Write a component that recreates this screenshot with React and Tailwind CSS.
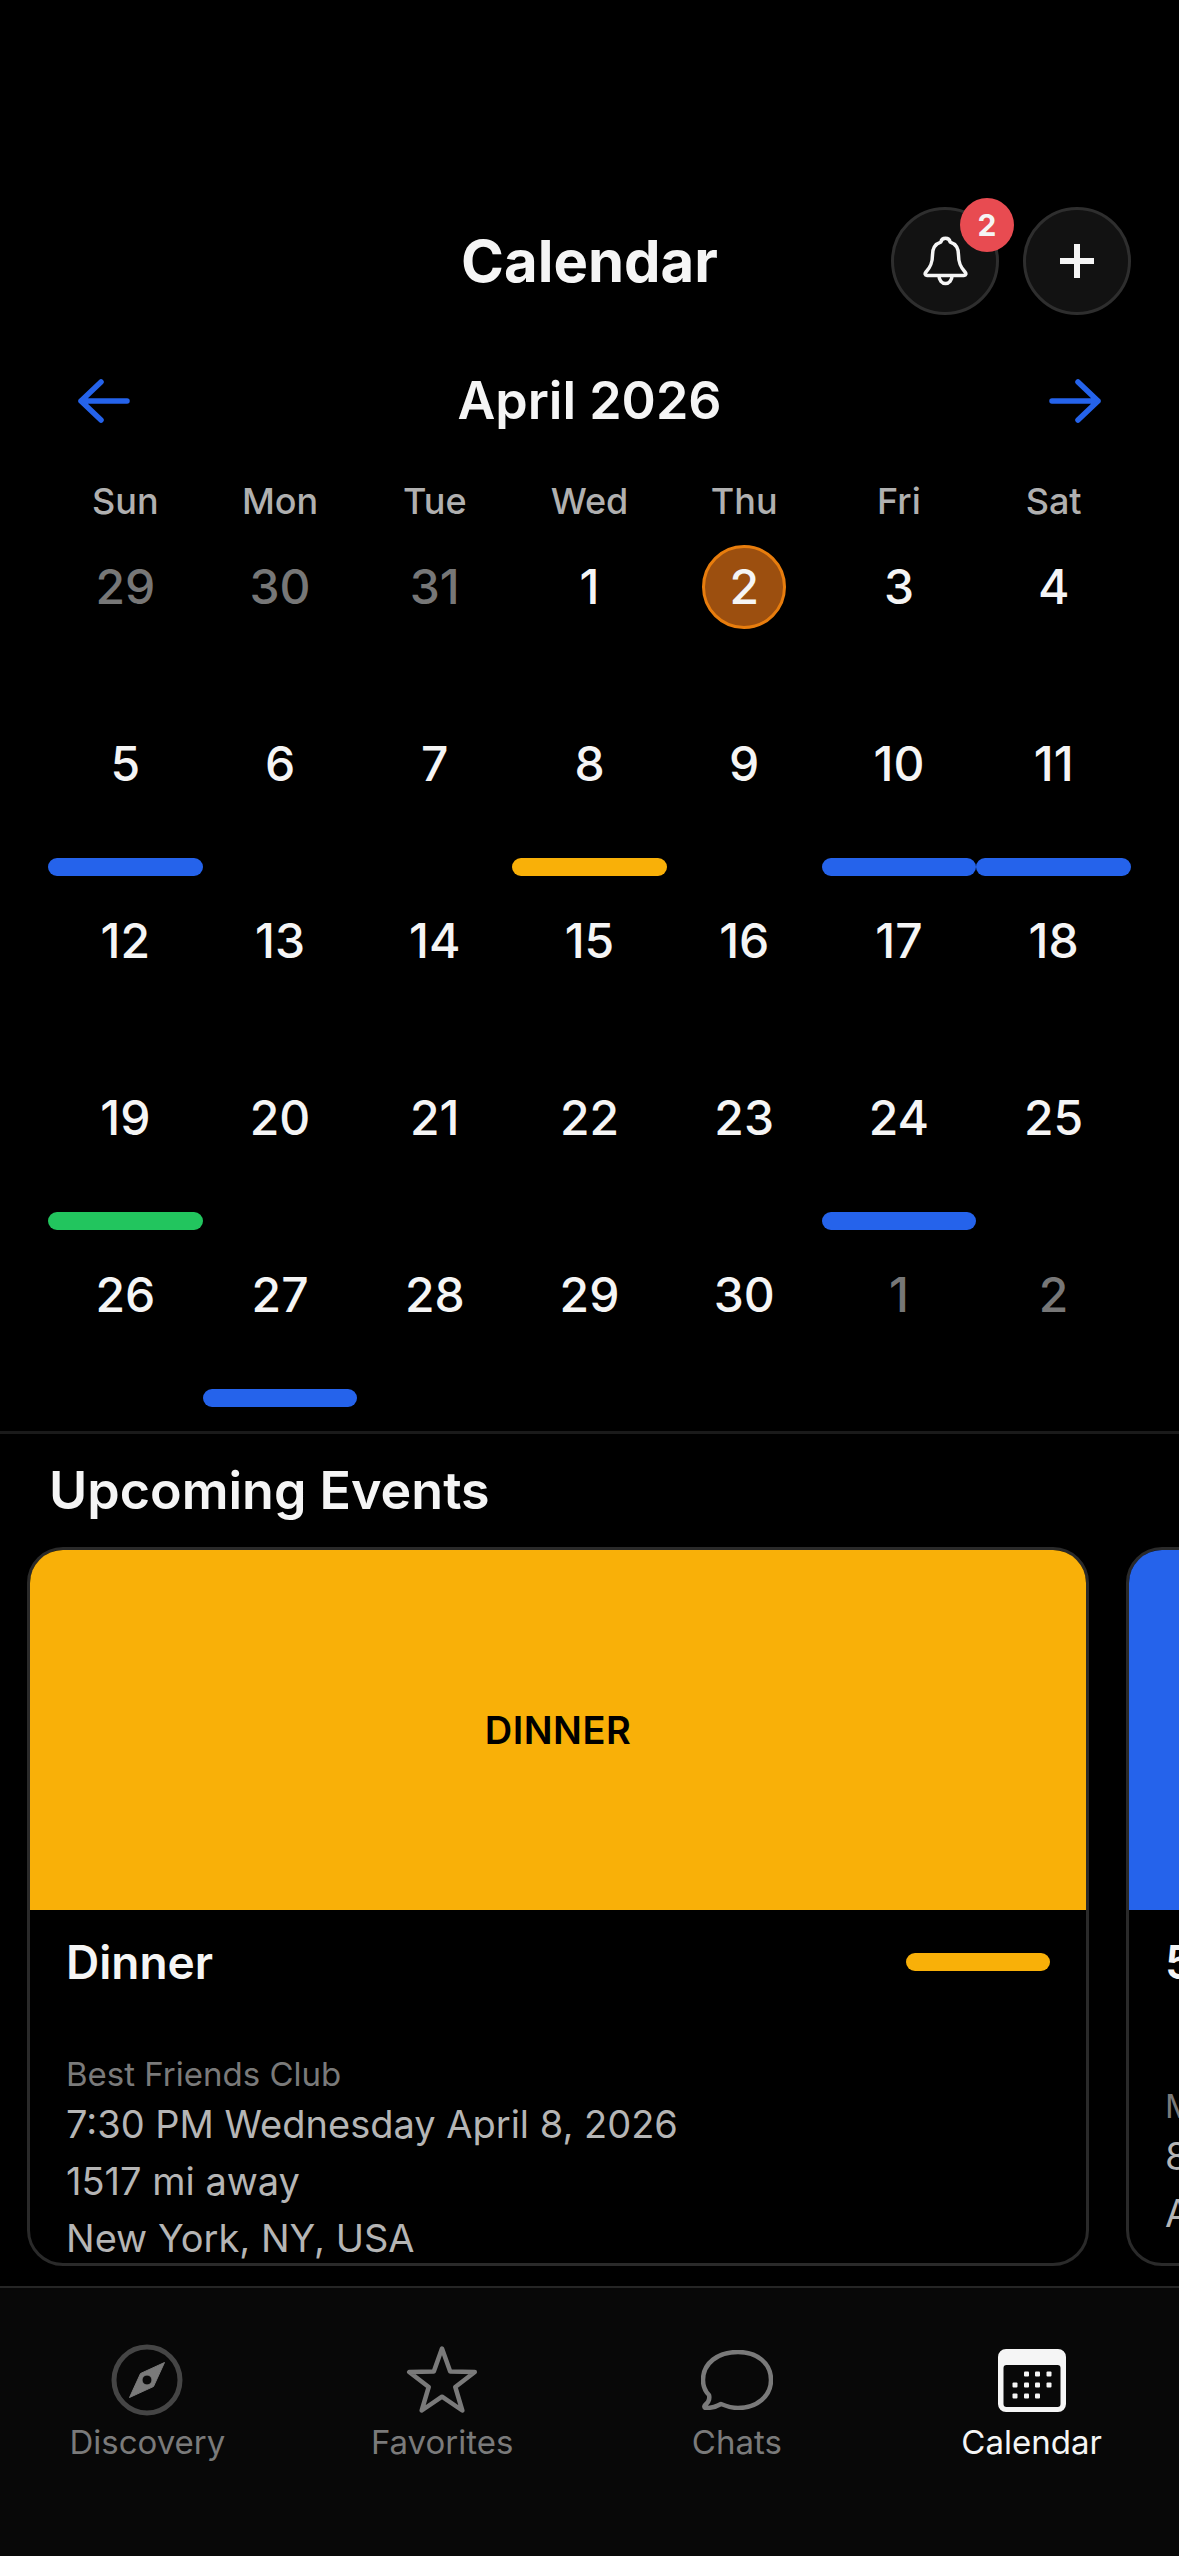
import React from "react";

const weekdays = ["Sun", "Mon", "Tue", "Wed", "Thu", "Fri", "Sat"];

const days = [
  { n: 29, muted: true }, { n: 30, muted: true }, { n: 31, muted: true }, { n: 1 }, { n: 2, today: true }, { n: 3 }, { n: 4 },
  { n: 5, bar: "bg-[#2563eb]" }, { n: 6 }, { n: 7 }, { n: 8, bar: "bg-[#f9b008]" }, { n: 9 }, { n: 10, bar: "bg-[#2563eb]" }, { n: 11, bar: "bg-[#2563eb]" },
  { n: 12 }, { n: 13 }, { n: 14 }, { n: 15 }, { n: 16 }, { n: 17 }, { n: 18 },
  { n: 19, bar: "bg-[#22c55e]" }, { n: 20 }, { n: 21 }, { n: 22 }, { n: 23 }, { n: 24, bar: "bg-[#2563eb]" }, { n: 25 },
  { n: 26 }, { n: 27, bar: "bg-[#2563eb]" }, { n: 28 }, { n: 29 }, { n: 30 }, { n: 1, muted: true }, { n: 2, muted: true },
];

const BellIcon = () => (
  <svg width="45" height="50" viewBox="0 0 45 50" fill="none" stroke="#f5f5f5" strokeWidth="3.5" strokeLinejoin="round">
    <path d="M22.5 2.2C25 2.2 26.8 4 27.2 6.2 33 8 35.5 13 35.5 19 35.5 27 37.5 31 42 36 43.5 37.7 43 39.5 41 39.5H4C2 39.5 1.5 37.7 3 36 7.5 31 9.5 27 9.5 19 9.5 13 12 8 17.8 6.2 18.2 4 20 2.2 22.5 2.2Z" />
    <path d="M16 40a6.5 7.5 0 0 0 13 0" />
  </svg>
);

const PlusIcon = () => (
  <svg width="34" height="34" viewBox="0 0 34 34" fill="none" stroke="#f5f5f5" strokeWidth="6">
    <path d="M17 0V34M0 17H34" />
  </svg>
);

const ArrowIcon = ({ flip }) => (
  <svg width="52" height="44" viewBox="0 0 52 44" fill="none" stroke="#2563eb" strokeWidth="5.5" strokeLinecap="round" strokeLinejoin="round" className={flip ? "-scale-x-100" : ""}>
    <path d="M3 22H49M23 3 3 22 23 41" />
  </svg>
);

const Compass = () => (
  <svg width="72" height="72" viewBox="0 0 72 72">
    <circle cx="36" cy="36" r="33" fill="none" stroke="#454545" strokeWidth="5" />
    <path fillRule="evenodd" fill="#7a7a7a" stroke="#7a7a7a" strokeWidth="1" strokeLinejoin="round" d="M53.5 18.5 42.5 42.5 18.5 53.5 29.5 29.5ZM36 31a5 5 0 1 0 0 10 5 5 0 0 0 0-10Z" />
  </svg>
);

const StarIcon = () => (
  <svg width="72" height="68" viewBox="0 0 72 68" fill="none" stroke="#7a7a7a" strokeWidth="4.5" strokeLinejoin="round">
    <path d="M36 2.5 44.2 25.5 68.8 26 49.3 41 56.3 64.5 36 50.7 15.7 64.5 22.7 41 3.2 26 27.8 25.5Z" />
  </svg>
);

const ChatBubble = () => (
  <svg width="72" height="60" viewBox="0 0 72 60" fill="none" stroke="#7a7a7a" strokeWidth="4.5" strokeLinejoin="round">
    <path d="M37 2C56 2 70 13 70 30 70 46 56 58 37 58 31 58 25 56 20 54 15 57 10 58 5 58 3 58 3 56 4 55 8 52 9 49 8 45 4 41 2 36 2 30 2 13 17 2 37 2Z" />
  </svg>
);

const CalendarIcon = () => (
  <svg width="68" height="63" viewBox="0 0 68 63">
    <path fillRule="evenodd" fill="#f5f5f5" d="M8 0H60A8 8 0 0 1 68 8V55A8 8 0 0 1 60 63H8A8 8 0 0 1 0 55V8A8 8 0 0 1 8 0ZM8.5 16A3 3 0 0 0 5.5 19V55A3 3 0 0 0 8.5 58H59.5A3 3 0 0 0 62.5 55V19A3 3 0 0 0 59.5 16Z" />
    {[[28.5, 25], [39.5, 25], [51, 25], [17, 36], [28.5, 36], [39.5, 36], [51, 36], [17, 47], [28.5, 47], [39.5, 47]].map(([x, y]) => (
      <rect key={`${x}-${y}`} x={x - 2.5} y={y - 2.5} width="5" height="5" rx="1" fill="#f5f5f5" />
    ))}
  </svg>
);

const NavItem = ({ icon, label, active }) => (
  <div className="flex flex-col items-center">
    <div className="flex h-[72px] items-center justify-center">{icon}</div>
    <span className={`mt-[6px] text-[33px] leading-[40px] ${active ? "text-[#f5f5f5]" : "text-[#7a7a7a]"}`}>{label}</span>
  </div>
);

const EventCard = ({ image, imageLabel, title, bar, org, when, distance, place, infoTop }) => (
  <div className="flex h-[719px] w-[1062px] shrink-0 flex-col overflow-hidden rounded-[36px] border-[3px] border-[#2a2a2a] bg-black">
    <div className={`flex h-[360px] shrink-0 items-center justify-center ${image}`}>
      <span className="text-[38px] font-semibold tracking-[0.5px] text-black">{imageLabel}</span>
    </div>
    <div className="flex items-center justify-between pl-[36px] pr-[36px] pt-[23px]">
      <span className="text-[46px] font-semibold leading-[58px] text-[#f5f5f5]">{title}</span>
      {bar && <div className={`h-[18px] w-[144px] rounded-full ${bar}`} />}
    </div>
    <div className={`pl-[36px] ${infoTop}`}>
      <div className="text-[33px] leading-[40px] text-[#7a7a7a]">{org}</div>
      <div className="mt-[2px] text-[38px] leading-[57px] text-[#b5b5b5]">{when}</div>
      {distance && <div className="text-[38px] leading-[57px] text-[#b5b5b5]">{distance}</div>}
      <div className="text-[38px] leading-[57px] text-[#b5b5b5]">{place}</div>
    </div>
  </div>
);

export default function App() {
  return (
    <div className="flex h-[2556px] w-[1179px] flex-col overflow-hidden bg-black font-['Inter',sans-serif]">
      <div className="relative mt-[207px] flex h-[108px] shrink-0 items-center justify-center">
        <h1 className="text-[58px] font-bold text-[#f5f5f5]">Calendar</h1>
        <div className="absolute right-[48px] top-0 flex gap-[24px]">
          <div className="relative flex h-[108px] w-[108px] items-center justify-center rounded-full border-[3px] border-[#2e2e2e] bg-[#121212]">
            <BellIcon />
            <span className="absolute right-[-18px] top-[-12px] flex h-[54px] w-[54px] items-center justify-center rounded-full bg-[#e84b51] text-[30px] font-bold text-[#f5f5f5]">2</span>
          </div>
          <div className="flex h-[108px] w-[108px] items-center justify-center rounded-full border-[3px] border-[#2e2e2e] bg-[#121212]">
            <PlusIcon />
          </div>
        </div>
      </div>

      <div className="mt-[50px] flex h-[72px] shrink-0 items-center justify-between px-[78px]">
        <ArrowIcon />
        <span className="text-[52px] font-semibold text-[#f5f5f5]">April 2026</span>
        <ArrowIcon flip />
      </div>

      <div className="mt-[40px] grid shrink-0 grid-cols-7 px-[48px]">
        {weekdays.map((d) => (
          <div key={d} className="flex h-[48px] items-center justify-center text-[36px] font-medium text-[#b0b0b0]">{d}</div>
        ))}
      </div>

      <div className="mt-[15px] grid shrink-0 grid-cols-7 px-[48px]">
        {days.map((d, i) => (
          <div key={i} className="flex h-[177px] flex-col items-center">
            <div className={`mt-[5px] flex h-[84px] w-[84px] items-center justify-center rounded-full text-[48px] font-medium ${d.today ? "border-[3px] border-[#e87d0d] bg-[#9c4f0f] text-[#f5f5f5]" : d.muted ? "text-[#777777]" : "text-[#f5f5f5]"}`}>{d.n}</div>
            {d.bar && <div className={`mt-[52px] h-[18px] w-full self-stretch rounded-full ${d.bar}`} />}
          </div>
        ))}
      </div>

      <div className="mt-[6px] h-[3px] shrink-0 bg-[#1a1a1a]" />

      <h2 className="mt-[24px] pl-[49px] text-[52px] font-semibold leading-[66px] text-[#f5f5f5]">Upcoming Events</h2>

      <div className="mt-[23px] flex shrink-0 gap-[37px] overflow-hidden pl-[27px]">
        <EventCard image="bg-[#f9b008]" imageLabel="DINNER" title="Dinner" bar="bg-[#f9b008]" org="Best Friends Club" when="7:30 PM Wednesday April 8, 2026" distance="1517 mi away" place="New York, NY, USA" infoTop="mt-[63px]" />
        <EventCard image="bg-[#2563eb]" imageLabel="" title="5" org="M" when="8" place="A" infoTop="mt-[95px]" />
      </div>

      <div className="mt-[20px] grid flex-1 grid-cols-4 border-t-[2px] border-[#262626] bg-[#080808] pt-[56px]">
        <NavItem icon={<Compass />} label="Discovery" />
        <NavItem icon={<StarIcon />} label="Favorites" />
        <NavItem icon={<ChatBubble />} label="Chats" />
        <NavItem icon={<CalendarIcon />} label="Calendar" active />
      </div>
    </div>
  );
}
